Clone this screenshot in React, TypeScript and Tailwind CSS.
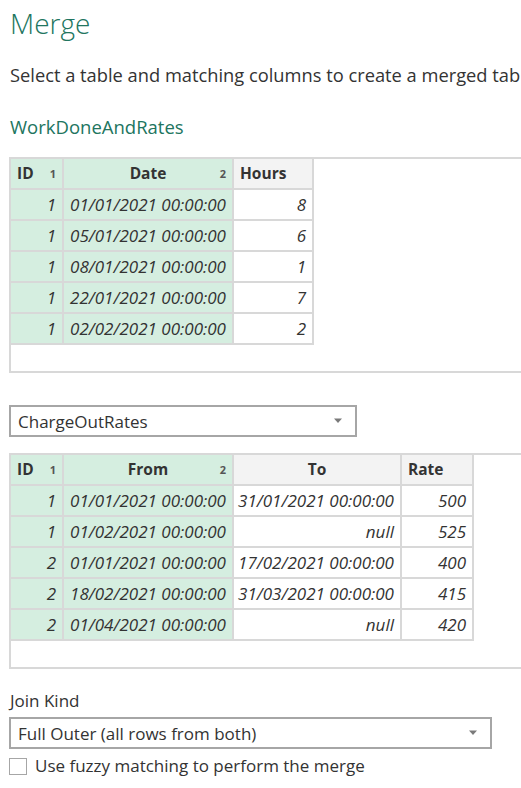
import type { ReactNode } from "react";

type Col = {
  name: string;
  width: string;
  key?: number;
  align: "left" | "center";
};

const FONT = { fontFamily: '"Segoe UI", "Open Sans", "Noto Sans", sans-serif' };

function Arrow() {
  return (
    <svg width="10" height="6" viewBox="0 0 10 6" className="shrink-0">
      <path d="M1 0.5h8L5 5z" fill="#7a7a7a" />
    </svg>
  );
}

function Dropdown({ label, width }: { label: string; width: string }) {
  return (
    <div
      className={`flex h-[32px] items-center justify-between border-2 border-[#a6a6a6] pl-[7px] pr-[12px] text-[17px] text-[#333] ${width}`}
    >
      <span className="leading-none">{label}</span>
      <Arrow />
    </div>
  );
}

function HeaderCell({ col }: { col: Col }) {
  const bg = col.key ? "bg-[#d5eee0]" : "bg-[#f3f3f3]";
  return (
    <div
      className={`relative flex h-[31px] items-center border-r-2 border-b-2 border-[#d8d8d8] px-[6px] text-[15.5px] font-bold text-[#333] ${bg} ${col.width} ${
        col.align === "center" ? "justify-center" : "justify-start"
      }`}
    >
      <span>{col.name}</span>
      {col.key && (
        <span className="absolute right-[6px] top-[7px] text-[11px] font-bold text-[#555]">
          {col.key}
        </span>
      )}
    </div>
  );
}

function DataCell({ value, col }: { value: string; col: Col }) {
  const bg = col.key ? "bg-[#d5eee0]" : "bg-white";
  return (
    <div
      className={`flex h-[31px] items-center justify-end border-r-2 border-b-2 border-[#d8d8d8] pr-[6px] text-[17px] italic text-[#333] ${bg} ${col.width}`}
    >
      {value}
    </div>
  );
}

function DataTable({ cols, rows }: { cols: Col[]; rows: string[][] }) {
  return (
    <div className="h-[216px] w-[600px] border-2 border-[#d8d8d8]">
      <div className="flex">
        {cols.map((c) => (
          <HeaderCell key={c.name} col={c} />
        ))}
      </div>
      {rows.map((r, i) => (
        <div key={i} className="flex">
          {r.map((v, j) => (
            <DataCell key={j} value={v} col={cols[j]} />
          ))}
        </div>
      ))}
    </div>
  );
}

function Label({ children, className }: { children: ReactNode; className?: string }) {
  return <div className={className}>{children}</div>;
}

const workCols: Col[] = [
  { name: "ID", width: "w-[53px]", key: 1, align: "left" },
  { name: "Date", width: "w-[170px]", key: 2, align: "center" },
  { name: "Hours", width: "w-[80px]", align: "left" },
];

const workRows = [
  ["1", "01/01/2021 00:00:00", "8"],
  ["1", "05/01/2021 00:00:00", "6"],
  ["1", "08/01/2021 00:00:00", "1"],
  ["1", "22/01/2021 00:00:00", "7"],
  ["1", "02/02/2021 00:00:00", "2"],
];

const rateCols: Col[] = [
  { name: "ID", width: "w-[53px]", key: 1, align: "left" },
  { name: "From", width: "w-[170px]", key: 2, align: "center" },
  { name: "To", width: "w-[168px]", align: "center" },
  { name: "Rate", width: "w-[72px]", align: "left" },
];

const rateRows = [
  ["1", "01/01/2021 00:00:00", "31/01/2021 00:00:00", "500"],
  ["1", "01/02/2021 00:00:00", "null", "525"],
  ["2", "01/01/2021 00:00:00", "17/02/2021 00:00:00", "400"],
  ["2", "18/02/2021 00:00:00", "31/03/2021 00:00:00", "415"],
  ["2", "01/04/2021 00:00:00", "null", "420"],
];

export default function App() {
  return (
    <div
      className="h-[788px] w-[521px] overflow-hidden bg-white pl-[9px] text-[#333]"
      style={FONT}
    >
      <Label className="pt-[3px] pl-[1px] text-[28px] font-light leading-[40px] text-[#217560]">
        Merge
      </Label>
      <Label className="mt-[20px] whitespace-nowrap pl-[1px] text-[18.3px] leading-[24px]">
        Select a table and matching columns to create a merged table.
      </Label>
      <Label className="mt-[28px] pl-[1px] text-[18.5px] leading-[24px] text-[#217560]">
        WorkDoneAndRates
      </Label>
      <div className="mt-[18px]">
        <DataTable cols={workCols} rows={workRows} />
      </div>
      <div className="mt-[32px]">
        <Dropdown label="ChargeOutRates" width="w-[348px]" />
      </div>
      <div className="mt-[16px]">
        <DataTable cols={rateCols} rows={rateRows} />
      </div>
      <Label className="mt-[20px] pl-[1px] text-[17px] leading-[24px]">Join Kind</Label>
      <div className="mt-[4px]">
        <Dropdown label="Full Outer (all rows from both)" width="w-[483px]" />
      </div>
      <label className="mt-[7px] flex items-center gap-[8px]">
        <span className="h-[17px] w-[18px] border border-[#a6a6a6] bg-white" />
        <span className="text-[17px] leading-[20px]">
          Use fuzzy matching to perform the merge
        </span>
      </label>
    </div>
  );
}
